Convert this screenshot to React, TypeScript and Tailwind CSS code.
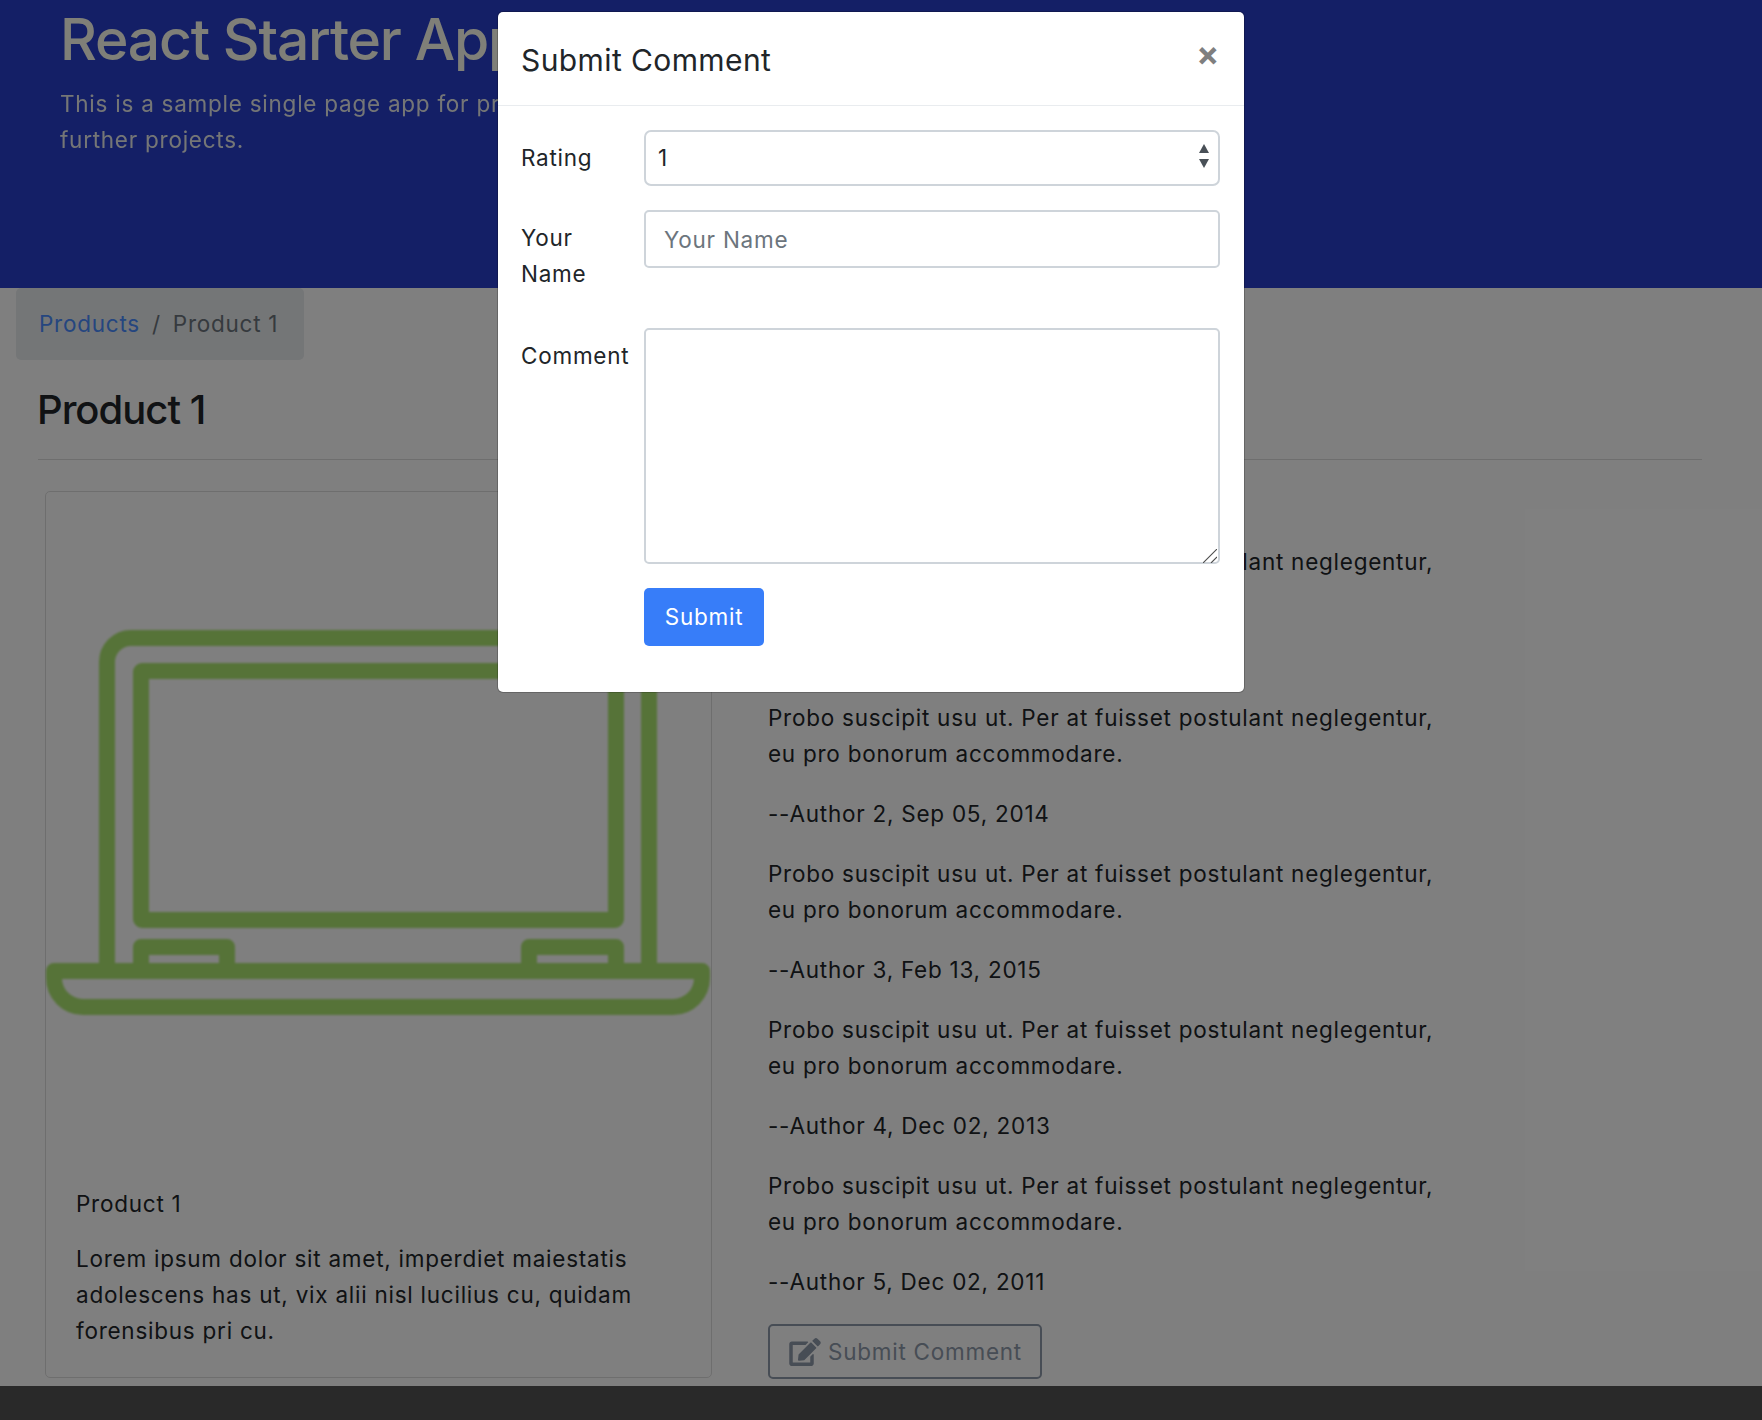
import { FaEdit } from 'react-icons/fa';

const reviews = [
  'Author 1, Jan 12, 2016',
  'Author 2, Sep 05, 2014',
  'Author 3, Feb 13, 2015',
  'Author 4, Dec 02, 2013',
  'Author 5, Dec 02, 2011',
];

function Laptop() {
  return (
    <svg viewBox="1 1 665 665" className="block w-[665px] h-[665px] blur-[0.8px]" fill="none" stroke="#ace670" strokeWidth="16" strokeLinejoin="round">
      <path d="M62 472V171a24 24 0 0 1 24-24H580a24 24 0 0 1 24 24V472" />
      <rect x="96" y="180" width="475" height="249" rx="1" />
      <path d="M96 472V456H182V472" />
      <path d="M484 472V456H571V472" />
      <path d="M9 480H657V487a29 29 0 0 1-29 29H38a29 29 0 0 1-29-29Z" />
    </svg>
  );
}

function SubmitModal() {
  return (
    <div className="absolute left-[498px] top-3 w-[746px] h-[680px] bg-white rounded-[5px] shadow-[0_0_0_1px_rgba(0,0,0,0.2)] text-[#212529]">
      <div className="h-[94px] border-b border-[#e9ecef] flex justify-between px-[23px]">
        <h5 className="text-[30px] leading-[42px] tracking-[0.4px] mt-[27px]">Submit Comment</h5>
        <span className="text-[#7f7f7f] text-[34px] leading-[34px] font-bold mt-[25px] mr-px">×</span>
      </div>
      <div className="pt-6 px-[23px]">
        <div className="flex h-[80px]">
          <label className="w-[123px] pt-[10px]">Rating</label>
          <div className="relative w-[576px] h-[56px] border-2 border-[#ced4da] rounded-[7px] flex items-center pl-3">
            <span>1</span>
            <svg viewBox="0 0 12 26" className="absolute right-[8px] top-[11px] w-3 h-[26px]" fill="#495057">
              <path d="M6 1l5 9H1z" />
              <path d="M6 25l-5-9h10z" />
            </svg>
          </div>
        </div>
        <div className="flex h-[118px]">
          <label className="w-[123px] pt-[10px]">Your<br />Name</label>
          <input placeholder="Your Name" className="w-[576px] h-[58px] border-2 border-[#ced4da] rounded-[5px] px-[18px] placeholder:text-[#6c757d] outline-none" />
        </div>
        <div className="flex h-[260px]">
          <label className="w-[123px] pt-[10px]">Comment</label>
          <div className="relative w-[576px] h-[236px]">
            <textarea className="block w-full h-full border-2 border-[#ced4da] rounded-[5px] outline-none resize-none" />
            <svg viewBox="0 0 14 14" className="absolute right-[3px] bottom-px w-[14px] h-[14px]" fill="none" stroke="#4a4a4a" strokeWidth="1.1">
              <path d="M0 14L14 0" />
              <path d="M8 14L14 8" />
            </svg>
          </div>
        </div>
        <button className="ml-[123px] w-[120px] h-[58px] bg-[#377df9] text-white rounded-[5px]">Submit</button>
      </div>
    </div>
  );
}

export default function App() {
  return (
    <div className="relative h-[1420px] overflow-hidden flex flex-col bg-white font-[Inter,sans-serif] text-[22.5px] leading-[36px] tracking-[0.75px] text-[#212529]">
      <header className="h-[288px] shrink-0 bg-[#283ecc] pl-[60px] pt-[6px] text-[#fffff0]">
        <h1 className="text-[57px] leading-[68px] font-medium tracking-[-1.2px]">React Starter App</h1>
        <p className="mt-[12px] opacity-90">This is a sample single page app for prototyping and for use as a base for<br />further projects.</p>
      </header>

      <main className="flex-1">
        <nav className="ml-4 w-[288px] h-[72px] bg-[#e9ecef] rounded-[5px] flex items-center pl-[23px]">
          <a className="text-[#4a8cff]">Products</a>
          <span className="mx-3 text-[#6c757d]">/</span>
          <span className="text-[#6c757d]">Product 1</span>
        </nav>
        <div className="ml-[38px] mr-[60px] h-[100px] border-b border-[#ddd] flex items-center">
          <h2 className="-ml-px text-[40px] leading-[48px] font-medium tracking-[-1px]">Product 1</h2>
        </div>
        <div className="flex mt-[31px] ml-[45px]">
          <div className="w-[667px] h-[887px] border border-[#ddd] rounded-[5px]">
            <Laptop />
            <div className="px-[30px] pt-[29px]">
              <div>Product 1</div>
              <p className="mt-[19px]">Lorem ipsum dolor sit amet, imperdiet maiestatis adolescens has ut, vix alii nisl lucilius cu, quidam forensibus pri cu.</p>
            </div>
          </div>
          <div className="ml-[56px] w-[680px] pt-[53px]">
            {reviews.map((r) => (
              <div key={r}>
                <p>Probo suscipit usu ut. Per at fuisset postulant neglegentur, eu pro bonorum accommodare.</p>
                <p className="my-6">--{r}</p>
              </div>
            ))}
            <button className="w-[274px] h-[55px] border-2 border-[#8e9aab] rounded-[5px] flex items-center justify-center gap-[6px] text-[#8e9aab]">
              <FaEdit className="w-[34px] h-7" />
              Submit Comment
            </button>
          </div>
        </div>
      </main>

      <footer className="h-[34px] shrink-0 bg-[#525252]" />

      <div className="absolute inset-0 bg-black/50" />
      <SubmitModal />
    </div>
  );
}
